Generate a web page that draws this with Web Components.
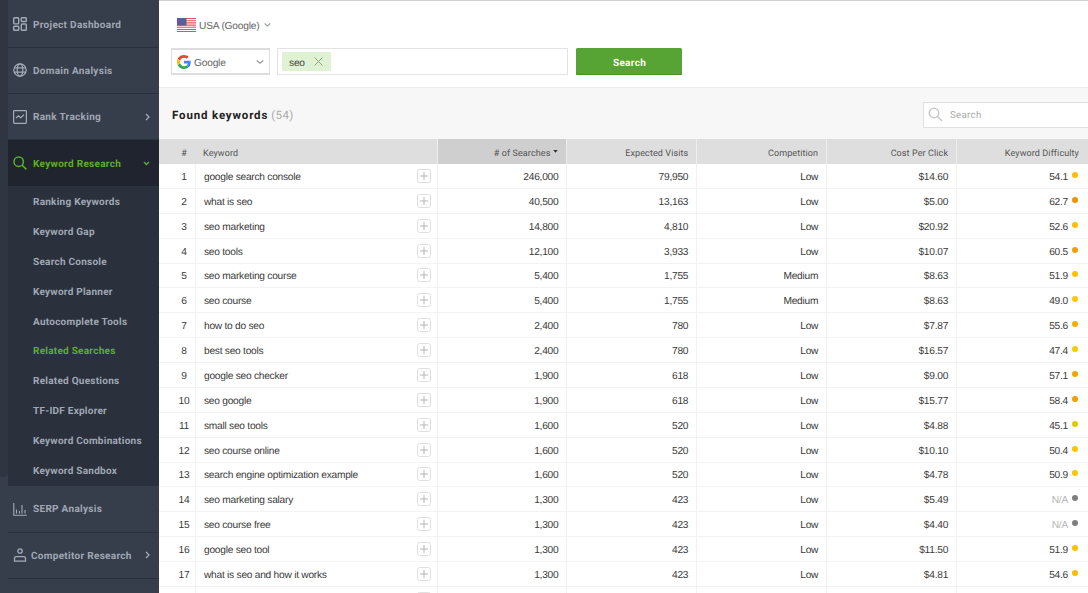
<!DOCTYPE html>
<html><head><meta charset="utf-8"><style>
html,body{margin:0;padding:0;height:593px;overflow:hidden;background:#fff}
body{display:flex;font-family:"Liberation Sans",Arial,sans-serif;text-rendering:geometricPrecision}
</style></head><body>
<x-sidebar></x-sidebar>
<x-main></x-main>
<script>
const ICONS={
dash:'<svg width="14" height="14" viewBox="0 0 14 14" fill="none" stroke="#a3abb8" stroke-width="1.4"><rect x=".7" y=".7" width="5" height="6.2" rx=".8"/><rect x="8.3" y=".7" width="5" height="3.8" rx=".8"/><rect x=".7" y="9.3" width="5" height="4" rx=".8"/><rect x="8.3" y="7" width="5" height="6.3" rx=".8"/></svg>',
globe:'<svg width="14" height="14" viewBox="0 0 14 14" fill="none" stroke="#a3abb8" stroke-width="1.2"><circle cx="7" cy="7" r="6.2"/><ellipse cx="7" cy="7" rx="2.8" ry="6.2"/><path d="M1.2 4.8h11.6M1.2 9.2h11.6"/></svg>',
rank:'<svg width="14" height="14" viewBox="0 0 14 14" fill="none" stroke="#a3abb8" stroke-width="1.2"><rect x=".6" y=".6" width="12.8" height="12.8" rx=".8"/><path d="M3 8.2l2.3-2.4 2.4 2 3.3-3"/></svg>',
search:'<svg width="14" height="14" viewBox="0 0 14 14" fill="none" stroke="#5fae2e" stroke-width="1.5"><circle cx="5.7" cy="5.7" r="4.7"/><path d="M9.2 9.2l4.2 4.2"/></svg>',
serp:'<svg width="14" height="14" viewBox="0 0 14 14" fill="none" stroke="#a3abb8" stroke-width="1.1"><path d="M.8 1v12.3h12.9M3.5 7.5v4M6.5 9v2.5M9 3v8.5M12 8v3.5"/></svg>',
comp:'<svg width="14" height="14" viewBox="0 0 14 14" fill="none" stroke="#a3abb8" stroke-width="1.3"><circle cx="7" cy="3" r="2.2"/><path d="M1.5 13.2v-2.8c0-1 .7-1.7 1.7-1.7h7.6c1 0 1.7.7 1.7 1.7v2.8z"/></svg>'};
class XNavItem extends HTMLElement{
 constructor(){super();const a=this.attachShadow({mode:'open'});
 const active=this.hasAttribute('active');
 const arrow=this.getAttribute('arrow');
 const gap=this.getAttribute('gap')||'6';
 a.innerHTML=`<style>
 :host{display:flex;align-items:center;height:46.33px;box-sizing:border-box;padding-left:5px;padding-right:9px;border-bottom:1px solid #2c323d;color:${active?'#5fae2e':'#a0a8b5'};font:700 10px Roboto,"Liberation Sans",sans-serif;letter-spacing:.3px;${active?'background:#1f242e;':''}}
 .i{width:14px;height:14px;display:flex;margin-right:${gap}px;flex:none}
 .t{flex:1;white-space:nowrap;padding-top:2px}
 svg.a{flex:none}
 </style><span class="i">${ICONS[this.getAttribute('icon')]}</span><span class="t"><slot></slot></span>
 ${arrow==='right'?'<svg class="a" width="5" height="8" viewBox="0 0 5 8" fill="none" stroke="#a3abb8" stroke-width="1.3"><path d="M1 1l3 3-3 3"/></svg>':arrow==='down'?'<svg class="a" width="7" height="5" viewBox="0 0 7 5" fill="none" stroke="#5fae2e" stroke-width="1.4"><path d="M1 1l2.5 2.5L6 1"/></svg>':''}`;}
}
customElements.define('x-nav-item',XNavItem);
class XSubItem extends HTMLElement{
 constructor(){super();const a=this.attachShadow({mode:'open'});
 a.innerHTML=`<style>:host{display:flex;align-items:center;box-sizing:border-box;height:29.85px;padding:1px 0 0 25px;color:${this.hasAttribute('active')?'#5fae2e':'#a0a8b5'};font:700 10px Roboto,"Liberation Sans",sans-serif;letter-spacing:.25px;white-space:nowrap}</style><slot></slot>`;}
}
customElements.define('x-sub-item',XSubItem);
class XSidebar extends HTMLElement{
 constructor(){super();const a=this.attachShadow({mode:'open'});
 const subs=['Ranking Keywords','Keyword Gap','Search Console','Keyword Planner','Autocomplete Tools','Related Searches','Related Questions','TF-IDF Explorer','Keyword Combinations','Keyword Sandbox'];
 a.innerHTML=`<style>
 :host{display:block;flex:none;width:159px;height:593px;background:#373e4b;overflow:hidden;box-sizing:border-box}
 .wrap{padding-left:8px;padding-top:1.5px}
 .strip{position:absolute;left:0;top:0;width:8px;height:477px;background:#2f3541;border-radius:0 0 4px 0}
 .sub{background:#2b313c;padding:.4px 0 0;height:299.5px;box-sizing:border-box}
 </style>
 <div class="strip"></div>
 <div class="wrap">
 <x-nav-item icon="dash">Project Dashboard</x-nav-item>
 <x-nav-item icon="globe">Domain Analysis</x-nav-item>
 <x-nav-item icon="rank" arrow="right">Rank Tracking</x-nav-item>
 <x-nav-item icon="search" arrow="down" active>Keyword Research</x-nav-item>
 <div class="sub">${subs.map(s=>`<x-sub-item ${s==='Related Searches'?'active':''}>${s}</x-sub-item>`).join('')}</div>
 <x-nav-item icon="serp">SERP Analysis</x-nav-item>
 <x-nav-item icon="comp" arrow="right" gap="4">Competitor Research</x-nav-item>
 </div>`;}
}
customElements.define('x-sidebar',XSidebar);
class XSearchBar extends HTMLElement{
 constructor(){super();const a=this.attachShadow({mode:'open'});
 a.innerHTML=`<style>
 :host{display:block;height:88px;box-sizing:border-box;background:#fff;border-top:1px solid #d0d0d0;border-bottom:1px solid #ececec;color:#555;font:10.2px "Liberation Sans",sans-serif;letter-spacing:-.2px;padding:16px 0 0 12px}
 .loc{display:flex;align-items:center;height:16px;margin-left:6px;color:#666}
 .loc span{padding-top:2px}
 .loc svg.f{margin-right:3px}
 .loc svg.c{margin-left:5px}
 .row{display:flex;margin-top:15px}
 .sel{width:99px;height:27px;box-sizing:border-box;border:1px solid #ddd;border-width:2px 1.5px;display:flex;align-items:center;padding:0 0 0 5px;color:#666}
 .sel span{padding-top:3px}
 .sel svg.g{margin:1px 3px 0 0}
 .sel svg.c{margin-left:auto;margin-right:5px}
 .inp{width:291px;height:27px;box-sizing:border-box;border:1.5px solid #e3e3e3;margin-left:7px;padding:3px 4px;display:flex}
 .tag{background:#e0f2d4;display:flex;align-items:center;width:49px;box-sizing:border-box;padding-left:7px;color:#444;height:19px}
 .tag span{padding-top:3px}
 .tag svg{margin-left:9px}
 .btn{margin-left:8px;width:106px;height:27px;padding:3px 0 0 1px;box-sizing:border-box;background:#57a333;border-radius:1.5px;color:#fff;display:flex;align-items:center;justify-content:center;font:700 10px Roboto,"Liberation Sans",sans-serif;letter-spacing:.3px;box-shadow:inset 0 -1px #4a9129}
 </style>
 <div class="loc"><svg class="f" width="19" height="14" viewBox="0 0 19 14"><rect width="19" height="14" fill="#fff"/><path d="M0 .5h19M0 2.7h19M0 4.9h19M0 7.1h19M0 9.3h19M0 11.5h19M0 13.5h19" stroke="#e2505c" stroke-width="1.1"/><rect width="9.5" height="7.5" fill="#5a5f95"/></svg><span>USA (Google)</span><svg class="c" width="7" height="4" viewBox="0 0 7 4" fill="none" stroke="#999" stroke-width="1.1"><path d="M.7.5l2.8 2.6L6.3.5"/></svg></div>
 <div class="row">
 <div class="sel"><svg class="g" width="14" height="14" viewBox="0 0 48 48"><path fill="#ea4335" d="M24 9.5c3.5 0 6.7 1.3 9.1 3.5l6.8-6.8C35.8 2.4 30.3 0 24 0 14.6 0 6.5 5.4 2.6 13.2l7.9 6.2C12.4 13.6 17.7 9.5 24 9.5z"/><path fill="#4285f4" d="M47 24.5c0-1.6-.2-3.1-.4-4.5H24v9h12.9c-.6 3-2.2 5.5-4.7 7.2l7.7 6C44.4 38.1 47 31.9 47 24.5z"/><path fill="#fbbc05" d="M10.5 28.6c-.5-1.4-.8-3-.8-4.6s.3-3.2.8-4.6l-7.9-6.2C1 16.4 0 20.1 0 24s.9 7.6 2.6 10.8z"/><path fill="#34a853" d="M24 48c6.5 0 11.9-2.1 15.9-5.8l-7.7-6c-2.2 1.5-4.9 2.3-8.2 2.3-6.3 0-11.6-4.2-13.5-9.9l-7.9 6.2C6.5 42.6 14.6 48 24 48z"/></svg><span>Google</span><svg class="c" width="8" height="4" viewBox="0 0 8 4" fill="none" stroke="#999" stroke-width="1.2"><path d="M.7.5L4 3.2 7.3.5"/></svg></div>
 <div class="inp"><div class="tag"><span>seo</span><svg width="9" height="9" viewBox="0 0 9 9" stroke="#8aa77a" stroke-width="1"><path d="M.5.5l8 8M8.5.5l-8 8"/></svg></div></div>
 <div class="btn">Search</div>
 </div>`;}
}
customElements.define('x-search-bar',XSearchBar);
class XTitleBar extends HTMLElement{
 constructor(){super();const a=this.attachShadow({mode:'open'});
 a.innerHTML=`<style>
 :host{display:flex;align-items:center;height:51px;box-sizing:border-box;background:#f7f7f7;padding-left:13px;padding-top:2px;overflow:hidden}
 b{font:700 11.5px Roboto,"Liberation Sans",sans-serif;letter-spacing:.85px;color:#222}
 .cnt{font:11.5px Roboto,"Liberation Sans",sans-serif;letter-spacing:.4px;color:#aaa;margin-left:3px}
 .s{margin-left:auto;width:170px;height:26px;box-sizing:border-box;background:#fff;border:1.5px solid #e0e0e0;border-right:0;display:flex;align-items:center;padding-left:4px;color:#aaa;font:9.7px Roboto,"Liberation Sans",sans-serif;letter-spacing:.3px;margin-right:-5px}
 .s span{padding-top:2px}
 .s svg{margin-right:7px}
 </style><b>Found keywords</b><span class="cnt">(54)</span><div class="s"><svg width="15" height="15" viewBox="0 0 15 15" fill="none" stroke="#c4c4c4" stroke-width="1.3"><circle cx="6" cy="6" r="4.8"/><path d="M9.5 9.5l4.5 4.5"/></svg><span>Search</span></div>`;}
}
customElements.define('x-title-bar',XTitleBar);
const DATA=[['google search console','246,000','79,950','Low','$14.60','54.1','#ffbb0a'],['what is seo','40,500','13,163','Low','$5.00','62.7','#ee9300'],['seo marketing','14,800','4,810','Low','$20.92','52.6','#ffbf00'],['seo tools','12,100','3,933','Low','$10.07','60.5','#f0a000'],['seo marketing course','5,400','1,755','Medium','$8.63','51.9','#ffc000'],['seo course','5,400','1,755','Medium','$8.63','49.0','#ffc800'],['how to do seo','2,400','780','Low','$7.87','55.6','#f7ae00'],['best seo tools','2,400','780','Low','$16.57','47.4','#f5cc00'],['google seo checker','1,900','618','Low','$9.00','57.1','#f4a400'],['seo google','1,900','618','Low','$15.77','58.4','#f0a000'],['small seo tools','1,600','520','Low','$4.88','45.1','#e6c800'],['seo course online','1,600','520','Low','$10.10','50.4','#ffc400'],['search engine optimization example','1,600','520','Low','$4.78','50.9','#ffc400'],['seo marketing salary','1,300','423','Low','$5.49','N/A','#7f7f7f'],['seo course free','1,300','423','Low','$4.40','N/A','#7f7f7f'],['google seo tool','1,300','423','Low','$11.50','51.9','#ffc000'],['what is seo and how it works','1,300','423','Low','$4.81','54.6','#ffbb0a'],['','','','','','','']];
class XKwTable extends HTMLElement{
 constructor(){super();const a=this.attachShadow({mode:'open'});
 const cols='36px 241.5px 129.9px 129.9px 129.9px 129.9px 131.9px';
 const rows=DATA.map((r,i)=>`<div class="tr">
 <div class="c n"><span>${r[0]?i+1:''}</span></div>
 <div class="c k"><span>${r[0]}</span><i class="plus"><svg width="8" height="8" viewBox="0 0 8 8" stroke="#b5b5b5" stroke-width="1"><path d="M4 0v8M0 4h8"/></svg></i></div>
 <div class="c r"><span>${r[1]}</span></div><div class="c r"><span>${r[2]}</span></div><div class="c r"><span>${r[3]}</span></div><div class="c r"><span>${r[4]}</span></div>
 <div class="c r d">${r[5]?`<span class="${r[5]==='N/A'?'na':''}">${r[5]}</span><u style="background:${r[6]}"></u>`:''}</div></div>`).join('');
 a.innerHTML=`<style>
 :host{display:block;background:#fff;color:#3a3a3a;font:10.2px "Liberation Sans",sans-serif;letter-spacing:-.25px}
 .tr,.hd{display:grid;grid-template-columns:${cols}}
 .hd{height:25px;background:#dedede;color:#555;font:9px Roboto,"Liberation Sans",sans-serif;letter-spacing:.1px}
 .hd div{display:flex;align-items:center;justify-content:flex-end;padding:4px 8px 0 0;box-sizing:border-box;border-left:1.5px solid #eee}
 .hd div:first-child{border-left:0}
 .hd .kw{justify-content:flex-start;padding-left:8px;border-left:0}
 .hd .n{justify-content:center;padding:4px 0 0 14px}
 .hd .sort{background:#cfcfcf}
 .hd .sort svg{margin-left:3px;margin-top:-4px}
 .hd .last{padding-right:9px}
 .tr{height:24.875px;box-sizing:border-box;border-bottom:1px solid #f3f3f3}
 .c{display:flex;align-items:center;justify-content:flex-end;box-sizing:border-box;padding-right:8px;border-left:1px solid #f1f1f1;white-space:nowrap}
 .c span{padding-top:3px}
 .n{border-left:0;justify-content:center;padding:0 0 0 14px}
 .k{justify-content:space-between;padding-left:8px;padding-right:6px}
 .plus{width:14px;height:14px;box-sizing:border-box;border:1px solid #e0e0e0;border-radius:2.5px;display:flex;align-items:center;justify-content:center}
 .d{padding-right:10px}
 .d u{width:6px;height:6px;border-radius:50%;margin-left:4px;margin-top:-2px}
 .na{color:#b4b4b4}
 </style>
 <div class="hd"><div class="n">#</div><div class="kw">Keyword</div><div class="sort"># of Searches<svg width="5" height="3" viewBox="0 0 6 4"><path d="M0 0h6L3 3.5z" fill="#333"/></svg></div><div>Expected Visits</div><div>Competition</div><div>Cost Per Click</div><div class="last">Keyword Difficulty</div></div>${rows}`;}
}
customElements.define('x-kw-table',XKwTable);
class XMain extends HTMLElement{
 constructor(){super();this.attachShadow({mode:'open'}).innerHTML=`<style>:host{display:block;flex:1;min-width:0;height:593px;overflow:hidden}</style><x-search-bar></x-search-bar><x-title-bar></x-title-bar><x-kw-table></x-kw-table>`;}
}
customElements.define('x-main',XMain);
</script>
</body></html>
